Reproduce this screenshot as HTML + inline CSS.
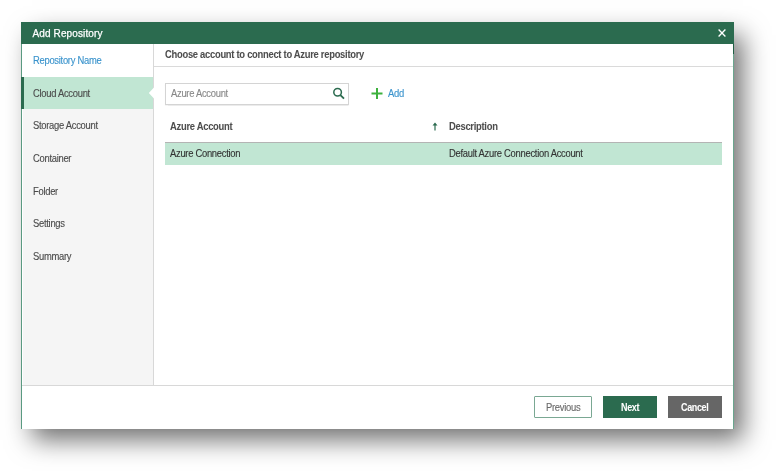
<!DOCTYPE html>
<html><head><meta charset="utf-8">
<style>
*{margin:0;padding:0;box-sizing:border-box}
html,body{width:776px;height:471px;background:#fff;overflow:hidden}
body{font-family:"Liberation Sans",sans-serif;position:relative;color:#444}
.a{position:absolute}
#dlg{left:21px;top:22px;width:713px;height:407px;background:#fff;box-shadow:9.5px 12px 24px -1px rgba(0,0,0,0.56)}
#layer{position:absolute;left:0;top:0;width:776px;height:471px;will-change:transform}
.t{position:absolute;white-space:nowrap;line-height:10px;font-size:10px;letter-spacing:-0.3px;transform-origin:0 0;transform:scaleX(.94)}
.b{font-weight:bold}
.side{color:#4a4a4a}
.t{-webkit-text-stroke:0.12px currentColor}
.t.b{-webkit-text-stroke:0.05px currentColor}
</style></head><body>
<div id="dlg" class="a"></div>
<div id="layer">
  <!-- header -->
  <div class="a" style="left:21px;top:22px;width:713px;height:22px;background:#2b6b4f"></div>
  <div class="a" style="left:32.5px;top:28.6px;font-size:10px;line-height:10px;color:#fff;white-space:nowrap;letter-spacing:0.12px;-webkit-text-stroke:0.25px #fff" id="title">Add Repository</div>
  <svg class="a" style="left:717px;top:28px" width="10" height="10" viewBox="0 0 10 10"><path d="M1.6 1.6L8.4 8.4M8.4 1.6L1.6 8.4" stroke="#fff" stroke-width="1.35"/></svg>
  <!-- borders -->
  <div class="a" style="left:21px;top:44px;width:1px;height:385px;background:#5a9a81"></div>
  <div class="a" style="left:733px;top:44px;width:1px;height:385px;background:#6aa58e"></div>
  <div class="a" style="left:733px;top:44px;width:1px;height:10px;background:#1f5e43"></div>
  <!-- sidebar -->
  <div class="a" style="left:23px;top:44px;width:130px;height:341px;background:#f5f5f5"></div>
  <div class="a" style="left:22px;top:44px;width:131px;height:33px;background:#fff"></div>
  <div class="a" style="left:22px;top:77px;width:131px;height:32px;background:#c1e6d3"></div>
  <div class="a" style="left:21px;top:77px;width:3px;height:32px;background:#2b6b4f"></div>
  <div class="a" style="left:153px;top:44px;width:1px;height:341px;background:#d8d8d8"></div>
  <svg class="a" style="left:148px;top:87px" width="6" height="12" viewBox="0 0 6 12"><path d="M6 0.5L0.8 6L6 11.5Z" fill="#fff"/></svg>

  <div class="t" style="left:32.5px;top:55.7px;color:#3a93cc">Repository Name</div>
  <div class="t side" style="left:32.5px;top:88.7px">Cloud Account</div>
  <div class="t side" style="left:32.5px;top:121.1px">Storage Account</div>
  <div class="t side" style="left:32.5px;top:153.7px">Container</div>
  <div class="t side" style="left:32.5px;top:186.8px">Folder</div>
  <div class="t side" style="left:32.5px;top:218.9px">Settings</div>
  <div class="t side" style="left:32.5px;top:251.6px">Summary</div>

  <!-- content heading -->
  <div class="t b" style="left:165px;top:49.5px;color:#4e4e4e">Choose account to connect to Azure repository</div>
  <div class="a" style="left:154px;top:66px;width:579px;height:1px;background:#dadada"></div>

  <!-- search -->
  <div class="a" style="left:165px;top:83px;width:184px;height:22px;border:1px solid #d4d4d4;background:#fff;box-shadow:0 0.5px 1px rgba(0,0,0,.08)"></div>
  <div class="t" style="left:170.5px;top:89.3px;color:#888">Azure Account</div>
  <svg class="a" style="left:331.5px;top:87px" width="14" height="14" viewBox="0 0 14 14"><circle cx="5.6" cy="5.3" r="3.8" fill="none" stroke="#2b6b4f" stroke-width="1.5"/><path d="M8.4 8.1L12 11.7" stroke="#2b6b4f" stroke-width="1.8"/></svg>
  <svg class="a" style="left:371px;top:88px" width="12" height="12" viewBox="0 0 12 12"><path d="M6 0V11M0.5 5.6H11.5" stroke="#3db13d" stroke-width="2"/></svg>
  <div class="t" style="left:388px;top:89px;color:#3a93cc">Add</div>

  <!-- table -->
  <div class="t b" style="left:170px;top:121.8px;color:#4e4e4e">Azure Account</div>
  <svg class="a" style="left:432px;top:122px" width="6" height="9" viewBox="0 0 6 9"><path d="M3 3V8.5" stroke="#2b6b4f" stroke-width="1.2"/><path d="M0.5 3.5L3 0.5L5.5 3.5Z" fill="#2b6b4f"/></svg>
  <div class="t b" style="left:449px;top:121.8px;color:#4e4e4e">Description</div>
  <div class="a" style="left:165px;top:142px;width:557px;height:23px;background:#c1e6d3;border-top:1.5px solid #b4b4b4"></div>
  <div class="t" style="left:170px;top:149.3px;color:#333">Azure Connection</div>
  <div class="t" style="left:449px;top:149.3px;color:#333">Default Azure Connection Account</div>

  <!-- footer -->
  <div class="a" style="left:22px;top:385px;width:711px;height:1px;background:#d8d8d8"></div>
  <div class="a" style="left:534px;top:396px;width:58px;height:22px;border:1px solid #7aa893;border-radius:1px;background:#fff"></div>
  <div class="t" style="left:545.5px;top:402.8px;color:#6a6a6a">Previous</div>
  <div class="a" style="left:603px;top:396px;width:54px;height:22px;background:#2b6b4f"></div>
  <div class="t b" style="left:620.5px;top:402.8px;color:#fff;letter-spacing:-0.4px;transform:scaleX(.9)">Next</div>
  <div class="a" style="left:668px;top:396px;width:54px;height:22px;background:#666"></div>
  <div class="t b" style="left:680.5px;top:402.8px;color:#fff;letter-spacing:-0.4px;transform:scaleX(.9)">Cancel</div>
</div>
</body></html>
